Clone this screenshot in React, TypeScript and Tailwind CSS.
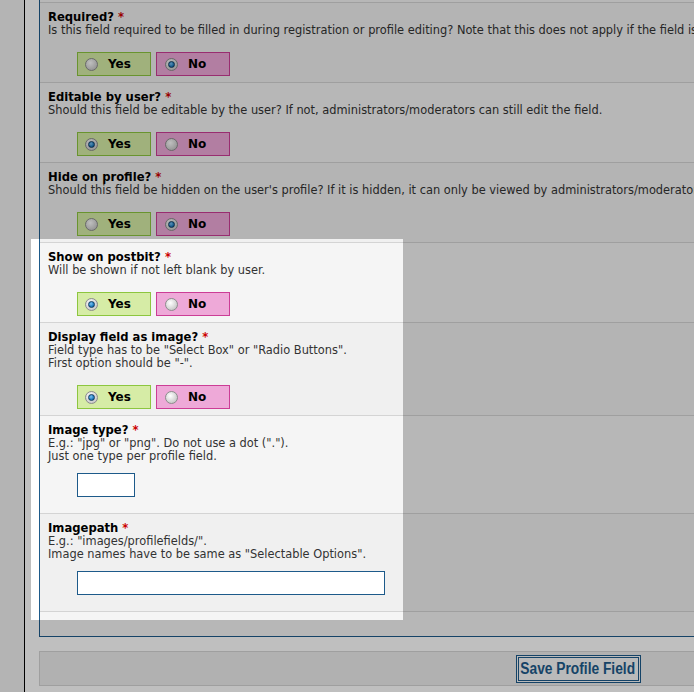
import React from "react";

type Row = {
  title: string;
  desc: string[];
  kind: "radio" | "input";
  yes?: boolean;
  inputWidth?: string;
  height: string;
  bg: string;
};

const rows: Row[] = [
  {
    title: "Required?",
    desc: [
      "Is this field required to be filled in during registration or profile editing? Note that this does not apply if the field is hidden on the edit profile page.",
    ],
    kind: "radio",
    yes: false,
    height: "h-[80px]",
    bg: "bg-[#f0f0f0]",
  },
  {
    title: "Editable by user?",
    desc: [
      "Should this field be editable by the user? If not, administrators/moderators can still edit the field.",
    ],
    kind: "radio",
    yes: true,
    height: "h-[80px]",
    bg: "bg-[#f5f5f5]",
  },
  {
    title: "Hide on profile?",
    desc: [
      "Should this field be hidden on the user's profile? If it is hidden, it can only be viewed by administrators/moderators.",
    ],
    kind: "radio",
    yes: false,
    height: "h-[80px]",
    bg: "bg-[#f0f0f0]",
  },
  {
    title: "Show on postbit?",
    desc: ["Will be shown if not left blank by user."],
    kind: "radio",
    yes: true,
    height: "h-[80px]",
    bg: "bg-[#f5f5f5]",
  },
  {
    title: "Display field as image?",
    desc: [
      'Field type has to be "Select Box" or "Radio Buttons".',
      'First option should be "-".',
    ],
    kind: "radio",
    yes: true,
    height: "h-[93px]",
    bg: "bg-[#f0f0f0]",
  },
  {
    title: "Image type?",
    desc: ['E.g.: "jpg" or "png". Do not use a dot (".").', "Just one type per profile field."],
    kind: "input",
    inputWidth: "w-[58px]",
    height: "h-[98px]",
    bg: "bg-[#f5f5f5]",
  },
  {
    title: "Imagepath",
    desc: ['E.g.: "images/profilefields/".', 'Image names have to be same as "Selectable Options".'],
    kind: "input",
    inputWidth: "w-[308px]",
    height: "h-[98px]",
    bg: "bg-[#f0f0f0]",
  },
];

function Radio({ checked }: { checked: boolean }) {
  return (
    <span className="flex h-[13px] w-[13px] items-center justify-center rounded-full border border-[#8c8c8c] bg-[radial-gradient(circle_at_40%_35%,#ffffff,#d4d4d4_60%,#b8b8b8)]">
      {checked && (
        <span className="h-[7px] w-[7px] rounded-full border border-[#123c5e] bg-[radial-gradient(circle_at_40%_35%,#7cc4f2,#1f7cc0_60%,#0d4f86)]" />
      )}
    </span>
  );
}

function YesNo({ yes }: { yes: boolean }) {
  return (
    <div className="mt-[15px] ml-[29px] flex gap-[5px]">
      <label className="flex h-[24px] w-[74px] items-center gap-[10px] border border-[#8dc63f] bg-[#d6eca6] pl-[7px] text-[12px] font-bold text-black">
        <Radio checked={yes} />
        Yes
      </label>
      <label className="flex h-[24px] w-[74px] items-center gap-[10px] border border-[#cc3d96] bg-[#eea9d8] pl-[8px] text-[12px] font-bold text-black">
        <Radio checked={!yes} />
        No
      </label>
    </div>
  );
}

export default function App() {
  return (
    <div className="relative h-[692px] w-[694px] overflow-hidden bg-white font-['DejaVu_Sans',Verdana,sans-serif]">
      <div className="flex h-full">
        <div className="w-[25px] shrink-0 border-r border-black bg-[#f1f1f1]" />
        <div className="shrink-0 pl-[14px]">
          <div className="flex w-[1077px] flex-col border-l border-b border-[#1d5a8a] bg-[#f5f5f5]">
            <div className="h-[2px] bg-[#f5f5f5]" />
            {rows.map((r) => (
              <div key={r.title} className={`${r.height} ${r.bg} border-t border-[#d4d4d4] pt-[7px] pl-[8px]`}>
                <div className="text-[11.6px] leading-[14px] font-bold text-black">
                  {r.title} <span className="text-[#cc0000]">*</span>
                </div>
                {r.desc.map((d) => (
                  <div key={d} className="whitespace-nowrap text-[11.4px] leading-[13px] text-[#333]">
                    {d}
                  </div>
                ))}
                {r.kind === "radio" ? (
                  <YesNo yes={!!r.yes} />
                ) : (
                  <input
                    className={`mt-[10px] ml-[29px] block h-[24px] ${r.inputWidth} border border-[#1d5a8a] bg-white`}
                  />
                )}
              </div>
            ))}
            <div className="h-[25px] border-t border-[#d4d4d4] bg-[#f5f5f5]" />
          </div>
          <div className="mt-[14px] flex h-[35px] w-[1078px] justify-center border border-[#d4d4d4] bg-[#ededed] pt-[3px]">
            <button className="flex h-[28px] w-[125px] items-center justify-center overflow-hidden border-[3px] border-double border-[#1d5a8a] bg-[#f8f8f8] font-['Liberation_Sans',Arial,sans-serif] text-[16px] font-bold text-[#1d5a8a]">
              <span className="inline-block scale-x-[0.86] whitespace-nowrap">Save Profile Field</span>
            </button>
          </div>
        </div>
      </div>
      <div className="pointer-events-none absolute top-[239px] left-[31px] h-[381px] w-[372px] shadow-[0_0_0_2000px_rgba(0,0,0,0.25)]" />
    </div>
  );
}
